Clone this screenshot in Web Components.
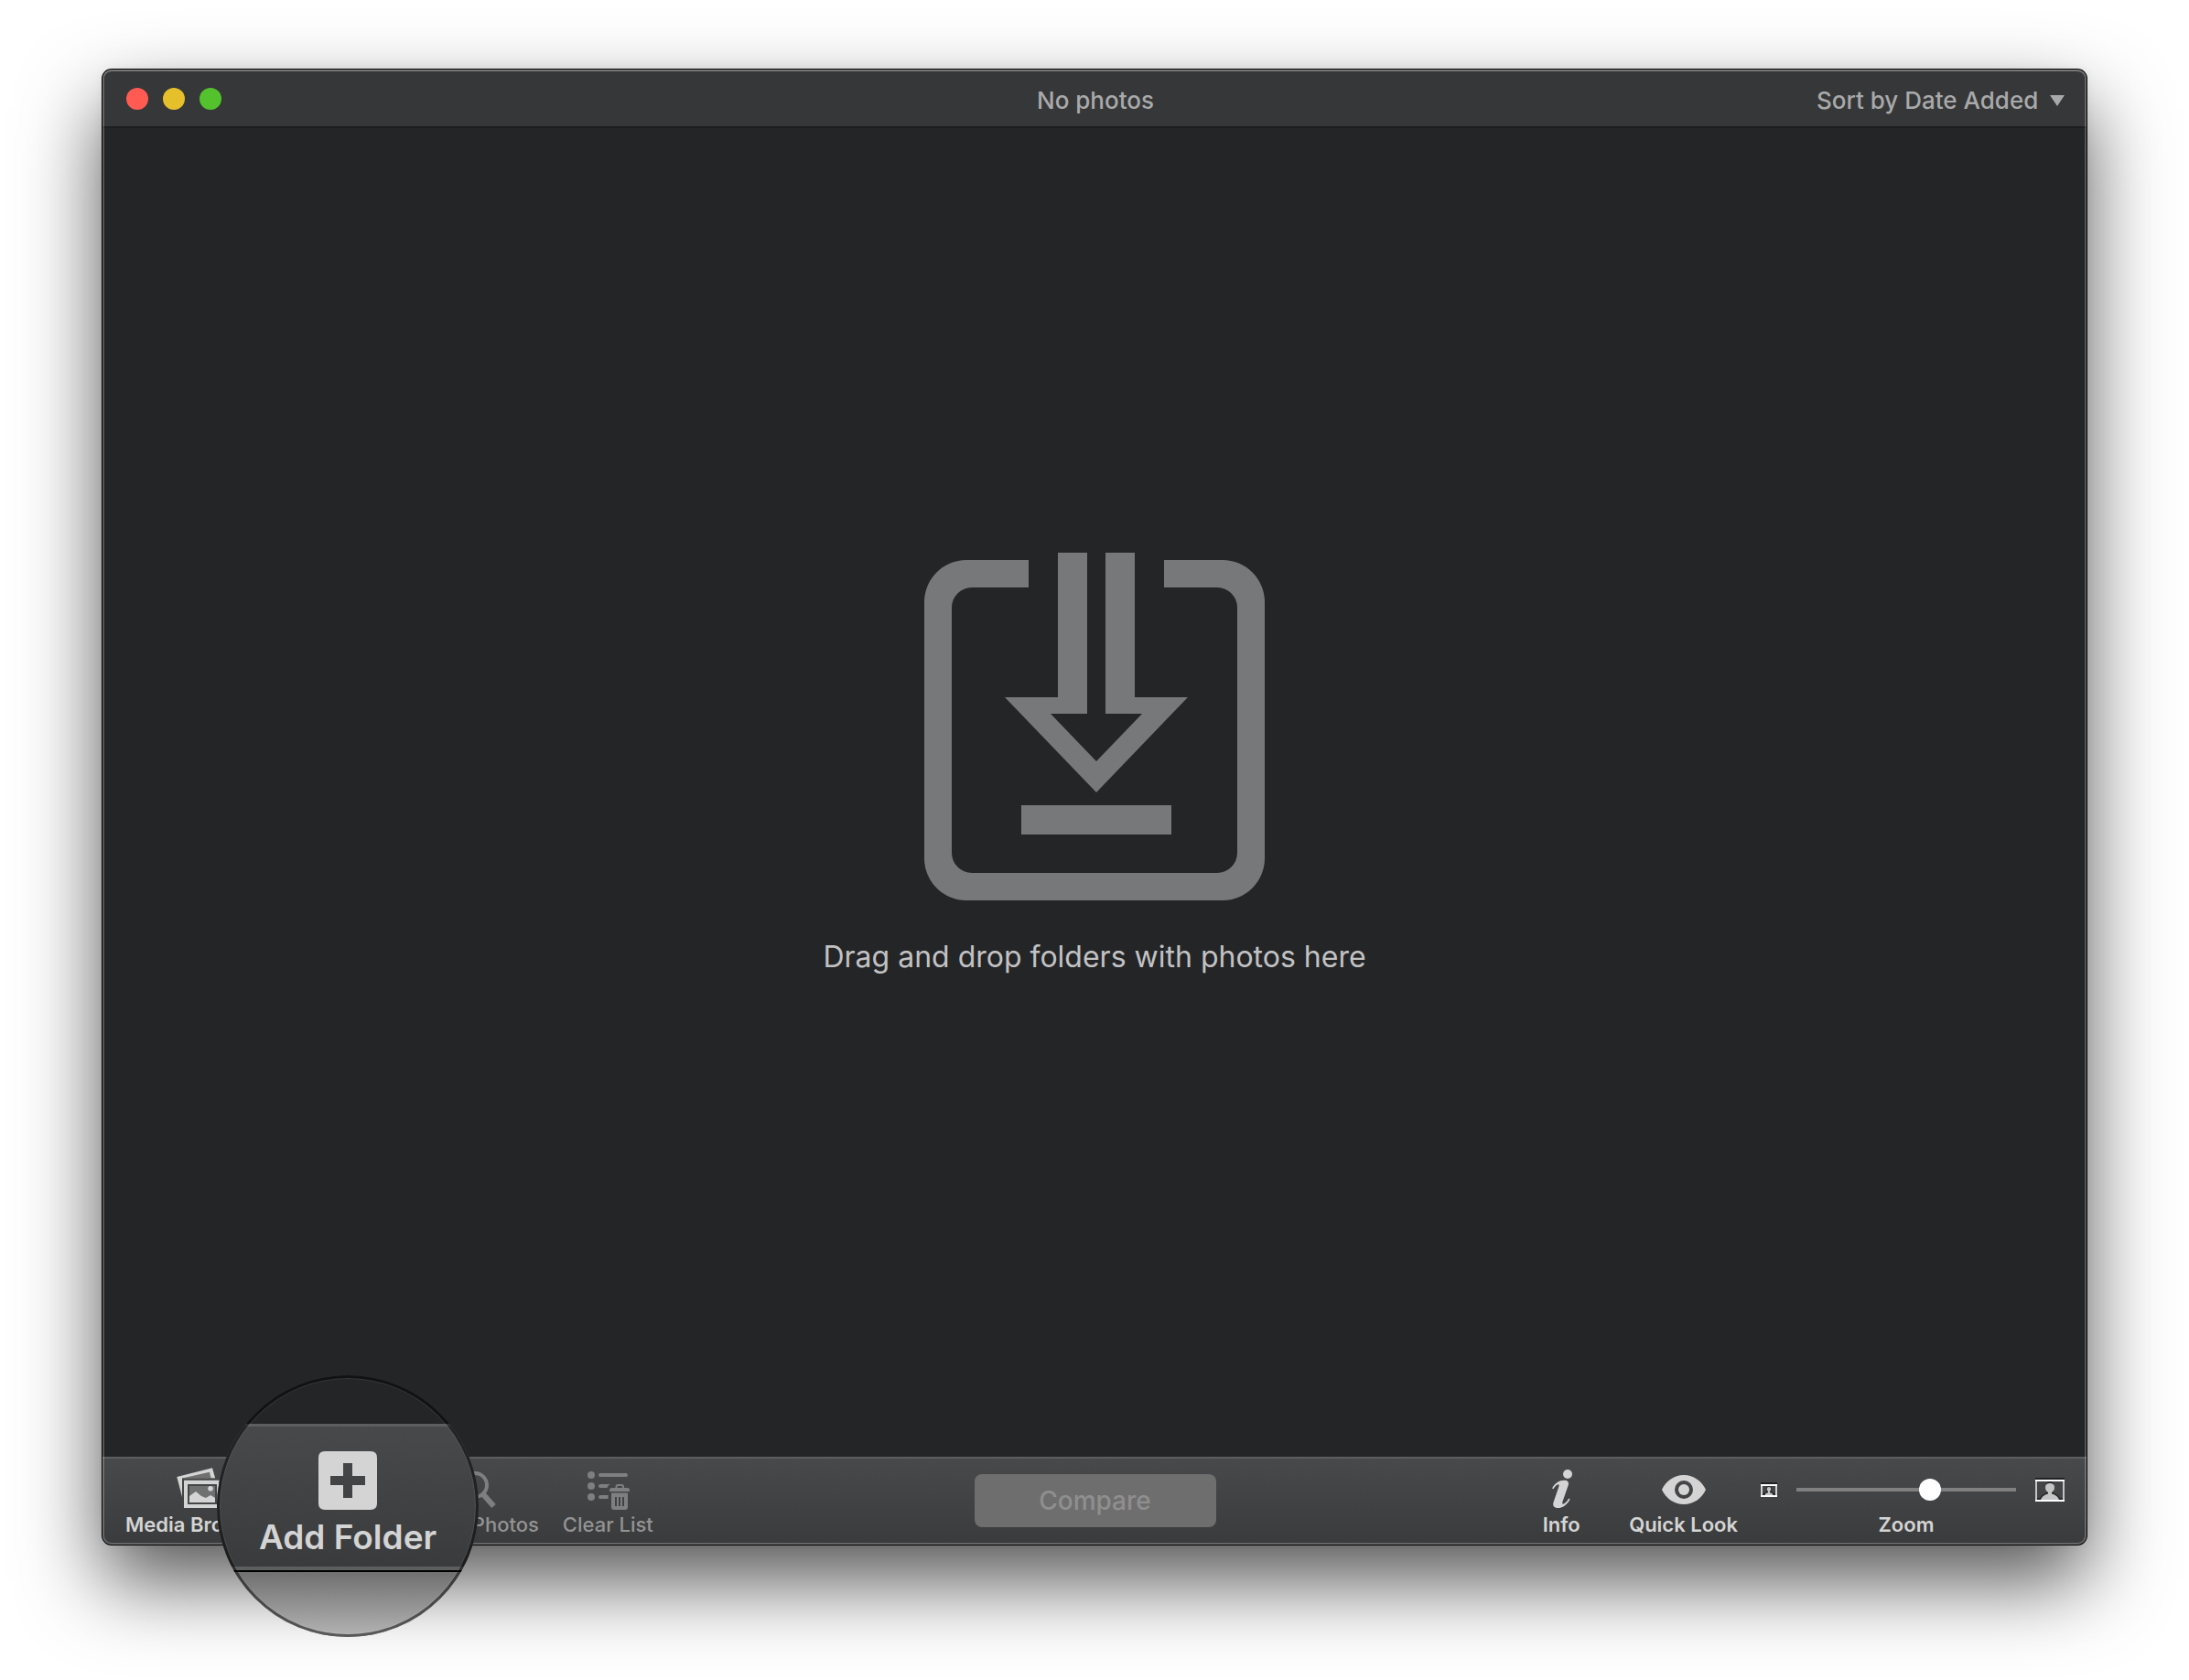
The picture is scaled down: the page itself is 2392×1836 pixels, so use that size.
<!DOCTYPE html>
<html lang="en">
<head>
<meta charset="utf-8">
<title>No photos</title>
<style>
  html { height: 100%; background: #fff; }
  body {
    margin: 0; min-height: 100%; box-sizing: border-box; display: flex;
    padding: 76px 112px 148px; overflow: hidden;
    font-family: Inter, "Liberation Sans", sans-serif; font-weight: 500;
  }
</style>
</head>
<body>
<app-window>
  <title-bar slot="title" heading="No photos"></title-bar>
  <drop-zone>Drag and drop folders with photos here</drop-zone>
  <tool-bar slot="tools">
    <tool-item slot="left" icon="media">Media Browser</tool-item>
    <magnifier-lens slot="left">Add Folder</magnifier-lens>
    <tool-item slot="left" icon="scan" disabled>Scan Photos</tool-item>
    <tool-item slot="left" icon="clear" disabled>Clear List</tool-item>
    <compare-button slot="center">Compare</compare-button>
    <tool-item slot="right" icon="info">Info</tool-item>
    <tool-item slot="right" icon="eye">Quick Look</tool-item>
    <zoom-control slot="right"></zoom-control>
  </tool-bar>
</app-window>

<script>
const define = (name, html, setup) => customElements.define(name, class extends HTMLElement {
  constructor() {
    super();
    this.attachShadow({ mode: 'open' }).innerHTML = html;
  }
  connectedCallback() { if (setup) setup(this, this.shadowRoot); }
});

const icons = {
  media: `<svg viewBox="0 0 48 48"><defs><pattern id="s" width="2" height="4" patternUnits="userSpaceOnUse"><path d="M1 0V4" stroke="#444546" stroke-width="1.400"/></pattern></defs>
    <path d="M.3 10 39 .3 42.2 11.5H6V32Z" fill="currentColor"/><path d="M6 11.5 36 4.800 37.600 11.500Z" fill="url(#s)"/>
    <path d="M6 11.700H42V13.700H8V32H6Z" fill="#444546"/>
    <path d="M8 13.700H48V44H8Z" fill="currentColor"/><path d="M12 18H44V40H12Z" fill="#444546"/>
    <path d="M14 20H42V38H14Z" fill="currentColor"/><path d="M14 20H42V33L37 30 32 33 27 31 21 26 14 31Z" fill="url(#s)"/>
    <circle cx="37" cy="22.800" r="2.800" fill="currentColor"/></svg>`,
  scan: `<svg viewBox="0 0 48 48" fill="none" stroke="currentColor"><circle cx="20" cy="19" r="13" stroke-width="4"/><path d="M28.500 28.500 40.500 42" stroke-width="6"/></svg>`,
  clear: `<svg viewBox="0 0 48 48" fill="currentColor"><circle cx="6" cy="8" r="4"/><circle cx="6" cy="20" r="4"/><circle cx="6" cy="32" r="4"/>
    <path d="M16 6H44a2 2 0 0 1 0 4H16a2 2 0 0 1 0-4ZM16 18H27Q24 19 23.500 22H16a2 2 0 0 1 0-4ZM16 30H24.600V34H16a2 2 0 0 1 0-4Z"/>
    <path d="M33.500 22V20.500Q33.500 19 35 19H39.500Q41 19 41 20.500V22" fill="none" stroke="currentColor" stroke-width="2"/>
    <path d="M26 26V24.500Q26 22 28.500 22H45.500Q48 22 48 24.500V26Z"/>
    <path fill-rule="evenodd" d="M28 27.500H46V43Q46 46 43 46H31Q28 46 28 43ZM32 32V42H34V32ZM36 32V42H38V32ZM40 32V42H42V32Z"/></svg>`,
  info: `<svg viewBox="0 0 48 48" fill="currentColor"><circle cx="31" cy="7" r="5"/><path d="M14 22.500C17 17 22 13.700 27 13.700 31 13.700 33 15.500 31.600 19.500L25.500 37C24.800 39.500 25.600 40.200 27.200 39.200 29.500 37.800 31 36 32.200 33.600L33.600 34.400C31 39.500 26 44 20.500 44 16 44 14.300 41.500 15.600 37.500L21.300 21C22 18.500 21.500 17.600 20 18.500 18 19.500 16.800 21 15.400 23.300Z"/></svg>`,
  eye: `<svg viewBox="0 0 48 48" fill="currentColor"><path fill-rule="evenodd" d="M0 24C4 15 13 8 24 8S44 15 48 24C44 33 35 40 24 40S4 33 0 24ZM24 14a10 10 0 1 0 0 20 10 10 0 0 0 0-20Z"/><circle cx="24" cy="24" r="6"/></svg>`
};

define('app-window', `
<style>
  :host { flex: 1; display: flex; flex-direction: column; position: relative; border-radius: 10px; background: #242527;
    box-shadow: 0 0 0 1px #000, 0 40px 88px rgba(0,0,0,.67), 0 0 12px rgba(0,0,0,.06); }
  :host::after { content: ""; position: absolute; inset: 0; border-radius: inherit; pointer-events: none;
    box-shadow: inset 0 2px 0 rgba(255,255,255,.14), inset 0 0 0 2px rgba(255,255,255,.22); }
  main { flex: 1; display: flex; }
</style>
<slot name="title"></slot><main><slot></slot></main><slot name="tools"></slot>`);

define('title-bar', `
<style>
  :host { display: block; }
  header { display: grid; grid-template-columns: 1fr auto 1fr; align-items: center; height: 60px; padding: 2px 24px 0 26px;
    background: #363739; border-bottom: 2px solid #1c1d1f;
    border-radius: 10px 10px 0 0; color: #a9a9aa; font-size: 26px; line-height: 32px; }
  .lights { display: flex; gap: 16px; }
  .lights button { width: 24px; height: 24px; border: 0; padding: 0; border-radius: 50%; background: var(--c); }
  h1, label { margin: 0; padding-top: 4px; font: inherit; }
  label { display: flex; justify-self: end; align-items: center; gap: 12px; }
  select { appearance: none; border: 0; padding: 0; margin: 0; background: none; color: inherit; font: inherit; line-height: 32px; }
  svg { width: 16px; height: 12px; fill: currentColor; }
</style>
<header>
  <div class="lights">
    <button aria-label="Close" style="--c:#ff5b52"></button><button aria-label="Minimize" style="--c:#e6c02a"></button><button aria-label="Full screen" style="--c:#54c22c"></button>
  </div>
  <h1></h1>
  <label><select aria-label="Sort order"><option>Sort by Date Added</option></select><svg viewBox="0 0 16 12"><path d="M0 0H16L8 12Z"/></svg></label>
</header>`, (el, root) => { root.querySelector('h1').textContent = el.getAttribute('heading'); });

define('drop-zone', `
<style>
  :host { flex: 1; display: flex; flex-direction: column; align-items: center; justify-content: center; gap: 42px; padding-bottom: 63px; color: #c2c2c3; font-size: 32px; font-weight: 400; line-height: 40px; }
  svg { width: 372px; height: 380px; fill: #77787a; }
  p { margin: 0; }
</style>
<svg viewBox="0 0 372 380">
  <path d="M114 8V38H52A22 22 0 0 0 30 60V328A22 22 0 0 0 52 350H320A22 22 0 0 0 342 328V60A22 22 0 0 0 320 38H262V8H326A46 46 0 0 1 372 54V334A46 46 0 0 1 326 380H46A46 46 0 0 1 0 334V54A46 46 0 0 1 46 8Z"/>
  <path d="M146 0H178V176H138L188 228 238 176H198V0H230V158H288L188 262 88 158H146Z"/>
  <path d="M106 276H270V308H106Z"/>
</svg>
<p><slot></slot></p>`);

define('tool-bar', `
<style>
  :host { display: grid; grid-template-columns: 1fr auto 1fr; align-items: start; padding: 10px 24px 8px 25px;
    border-top: 2px solid #5c5e5f; border-radius: 0 0 10px 10px; background: linear-gradient(#48494b, #3a3b3c); }
  .left, .right { display: flex; }
  .left { gap: 26px; }
  .right { justify-self: end; }
  .right ::slotted(tool-item[icon="eye"]) { margin: 0 25px 0 50px; }
</style>
<div class="left"><slot name="left"></slot></div><slot name="center"></slot><div class="right"><slot name="right"></slot></div>`);

define('tool-item', `
<style>
  :host { display: block; color: #d4d4d4; }
  :host([disabled]) { color: #939393; }
  button { display: flex; flex-direction: column; align-items: center; border: 0; padding: 0; margin: 0; background: none; color: inherit;
    font: inherit; font-size: 22px; font-weight: 600; line-height: 28px; white-space: nowrap; }
  .icon { display: block; width: 48px; height: 48px; }
  :host([disabled]) button { font-weight: 500; }
  :host([disabled]) .icon { color: #7e7f80; }
</style>
<button><span class="icon"></span><span><slot></slot></span></button>`, (el, root) => {
  root.querySelector('.icon').innerHTML = icons[el.getAttribute('icon')];
  root.querySelector('button').disabled = el.hasAttribute('disabled');
});

/* Takes one tool's place in the bar and shows it enlarged in a round lens over the bar. */
define('magnifier-lens', `
<style>
  :host { display: block; position: relative; width: 109px; }
  button { position: absolute; z-index: 2; left: -85px; top: -101px; width: 286px; height: 286px; margin: 0; padding: 0; border: 0; border-radius: 50%; overflow: hidden;
    display: flex; flex-direction: column; align-items: stretch; background: #242527; font: inherit; font-size: 37px; font-weight: 600; line-height: 44px; white-space: nowrap; color: #d4d4d4; }
  button::after { content: ""; position: absolute; inset: 0; border-radius: 50%; border: 3px solid rgba(0,0,0,.5); box-shadow: inset 0 0 0 1px rgba(255,255,255,.08); box-sizing: border-box; }
  .bar { margin-top: 53px; height: 126px; padding-top: 27px; border-top: 3px solid #5c5e5f; border-bottom: 4px solid #5c5e5f;
    display: flex; flex-direction: column; align-items: center; gap: 8px; background: linear-gradient(#48494b, #3a3b3c); }
  .below { flex: 1; border-top: 2px solid #000; background: linear-gradient(#707070, #b4b4b4); }
  svg { flex: none; width: 64px; height: 64px; fill: currentColor; }
</style>
<button>
  <span class="bar">
    <svg viewBox="0 0 64 64"><path fill-rule="evenodd" d="M7 0H57Q64 0 64 7V57Q64 64 57 64H7Q0 64 0 57V7Q0 0 7 0ZM27 13V27H13V37H27V51H37V37H51V27H37V13Z"/></svg>
    <span><slot></slot></span>
  </span>
  <span class="below"></span>
</button>`);

define('compare-button', `
<style>
  :host { display: block; padding-top: 7px; }
  button { display: block; width: 264px; height: 58px; border: 0; border-radius: 8px; padding: 0; background: #6e6e6e; color: #8f8f8f; font: inherit; font-size: 28px; }
</style>
<button disabled><slot></slot></button>`);

define('zoom-control', `
<style>
  :host { display: grid; grid-template-columns: 18px 240px 32px; grid-template-rows: 48px 28px; column-gap: 21px; align-items: center; justify-items: center; color: #d4d4d4; font-size: 22px; font-weight: 600; line-height: 28px; }
  svg { display: block; }
  .small { width: 18px; height: 16px; }
  .large { width: 32px; height: 26px; }
  label { grid-column: 2; }
  input { appearance: none; width: 240px; height: 24px; margin: 0; background: linear-gradient(#808080, #808080) center / 100% 4px no-repeat; }
  input::-webkit-slider-thumb { appearance: none; width: 24px; height: 24px; border-radius: 50%; background: #fff; }
</style>
<svg class="small" viewBox="0 0 18 16"><path d="M0 0H18V2H0Z" fill="#222"/><path d="M2 4H16V14H2Z" fill="#444546"/><path d="M2 14V12L6 10.500V6Q9 2 12 6V10.500L16 12V14Z" fill="#28292a"/><path d="M4.500 14Q5 11.500 8 11.200V10Q6.600 8.500 6.700 7 7 5 9 5T11.300 7Q11.400 8.500 10 10V11.200Q13 11.500 13.500 14Z" fill="#c4c4c4"/><path d="M0 2H2V16H0ZM16 2H18V16H16Z" fill="#d0d0d0"/><path d="M0 2H18V4H0ZM0 14H18V16H0Z" fill="#fff"/></svg>
<input id="zoom" type="range" min="0" max="100" value="62">
<svg class="large" viewBox="0 0 32 26"><path d="M0 0H32V2H0Z" fill="#222"/><path d="M2 4H30V24H2Z" fill="#444546"/><path d="M2 24V22H5Q7 18 12 16.500V8Q12 4 16 4T20 8V16.500Q25 18 27 22H30V24Z" fill="#28292a"/><path d="M6 24Q7.500 19 14 17.500V16Q11 14 11 10.500 11 6 16 6T21 10.500Q21 14 18 16V17.500Q24.500 19 26 24Z" fill="#c4c4c4"/><path d="M0 2H2V26H0ZM30 2H32V26H30Z" fill="#c4c4c4"/><path d="M0 2H32V4H0ZM0 24H32V26H0Z" fill="#fff"/></svg>
<label for="zoom">Zoom</label>`);
</script>
</body>
</html>
